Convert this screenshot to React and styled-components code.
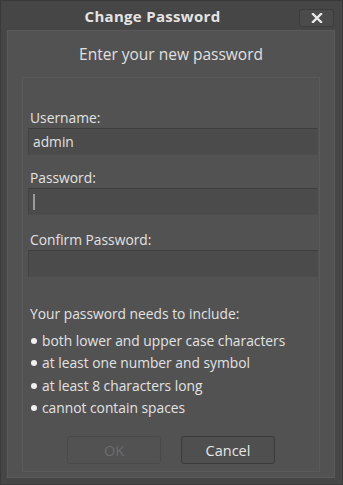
import React from 'react';
import styled, { createGlobalStyle } from 'styled-components';

const GlobalStyle = createGlobalStyle`
    html, body {
        margin: 0;
        padding: 0;
        background: #444444;
    }
    body {
        font-family: "Open Sans", "Noto Sans", sans-serif;
        color: #e2e2e2;
    }
`;

const Dialog = styled.div`
    width: 343px;
    height: 485px;
    box-sizing: border-box;
    background: #464646;
    border: 1px solid #3a3a3a;
    display: flex;
    flex-direction: column;
`;

const TitleBar = styled.div`
    height: 32px;
    display: flex;
    align-items: center;
    position: relative;
`;

const Title = styled.div`
    flex: 1;
    padding-right: 38px;
    text-align: center;
    font-size: 15px;
    font-weight: 700;
    color: #e4e4e4;
    letter-spacing: 0.3px;
`;

const CloseButton = styled.button`
    position: absolute;
    right: 8px;
    top: 8px;
    width: 35px;
    height: 18px;
    box-sizing: border-box;
    background: #4b4b4b;
    border: 1px solid #3c3c3c;
    border-radius: 3px;
    display: flex;
    align-items: center;
    justify-content: center;
    padding: 0;
`;

const Panel = styled.div`
    flex: 1;
    margin: 0 7px 6px 6px;
    background: #525252;
    border: 1px solid #5a5a5a;
    display: flex;
    flex-direction: column;
`;

const Heading = styled.div`
    height: 45px;
    padding-bottom: 1px;
    display: flex;
    align-items: center;
    justify-content: center;
    font-size: 15.5px;
    color: #e0e0e0;
`;

const Group = styled.div`
    flex: 1;
    margin: 0 14px 5px;
    border: 1px solid #5a5a5a;
    padding: 30px 1px 7px 5px;
    display: flex;
    flex-direction: column;
`;

const Label = styled.div`
    font-size: 13.8px;
    line-height: 20px;
    padding-left: 2px;
    margin-top: ${p => p.$gap || 0}px;
`;

const Input = styled.div`
    height: 27px;
    box-sizing: border-box;
    background: #4b4b4b;
    border: 1px solid #4d4d4d;
    border-top-color: #3e3e3e;
    border-left-color: #434343;
    font-size: 13.8px;
    line-height: 25px;
    padding-left: 4px;
    display: flex;
    align-items: center;
`;

const Caret = styled.span`
    width: 2px;
    height: 16px;
    background: #9a9a9a;
`;

const Requirements = styled.div`
    margin-top: 27px;
    padding-left: 2px;
    font-size: 13.8px;
    line-height: 20px;
`;

const List = styled.ul`
    list-style: none;
    margin: 6px 0 0;
    padding: 0 0 0 3px;
`;

const Item = styled.li`
    display: flex;
    align-items: center;
    font-size: 13.8px;
    line-height: 22.2px;
    &::before {
        content: '';
        width: 6px;
        height: 6px;
        border-radius: 50%;
        background: #f0f0f0;
        margin-right: 5px;
    }
`;

const Buttons = styled.div`
    margin-top: 17px;
    display: flex;
    justify-content: center;
    gap: 20px;
    padding-right: 4px;
`;

const Button = styled.button`
    width: 94px;
    height: 28px;
    box-sizing: border-box;
    border-radius: 3px;
    font-family: inherit;
    font-size: 14.5px;
    background: ${p => (p.disabled ? '#525252' : '#4f4f4f')};
    border: 1px solid ${p => (p.disabled ? '#4a4a4a' : '#3b3b3b')};
    color: ${p => (p.disabled ? '#6c6c6c' : '#e6e6e6')};
`;

const rules = [
    'both lower and upper case characters',
    'at least one number and symbol',
    'at least 8 characters long',
    'cannot contain spaces',
];

const App = () => (
    <>
        <GlobalStyle />
        <Dialog>
            <TitleBar>
                <Title>Change Password</Title>
                <CloseButton>
                    <svg width="12" height="10" viewBox="0 0 12 10">
                        <path d="M2 1 L10 9 M10 1 L2 9" stroke="#e8e8e8" strokeWidth="2.4" strokeLinecap="square" />
                    </svg>
                </CloseButton>
            </TitleBar>
            <Panel>
                <Heading>Enter your new password</Heading>
                <Group>
                    <Label>Username:</Label>
                    <Input>admin</Input>
                    <Label $gap={13}>Password:</Label>
                    <Input><Caret /></Input>
                    <Label $gap={15}>Confirm Password:</Label>
                    <Input />
                    <Requirements>Your password needs to include:</Requirements>
                    <List>
                        {rules.map(r => <Item key={r}>{r}</Item>)}
                    </List>
                    <Buttons>
                        <Button disabled>OK</Button>
                        <Button>Cancel</Button>
                    </Buttons>
                </Group>
            </Panel>
        </Dialog>
    </>
);

export default App;
